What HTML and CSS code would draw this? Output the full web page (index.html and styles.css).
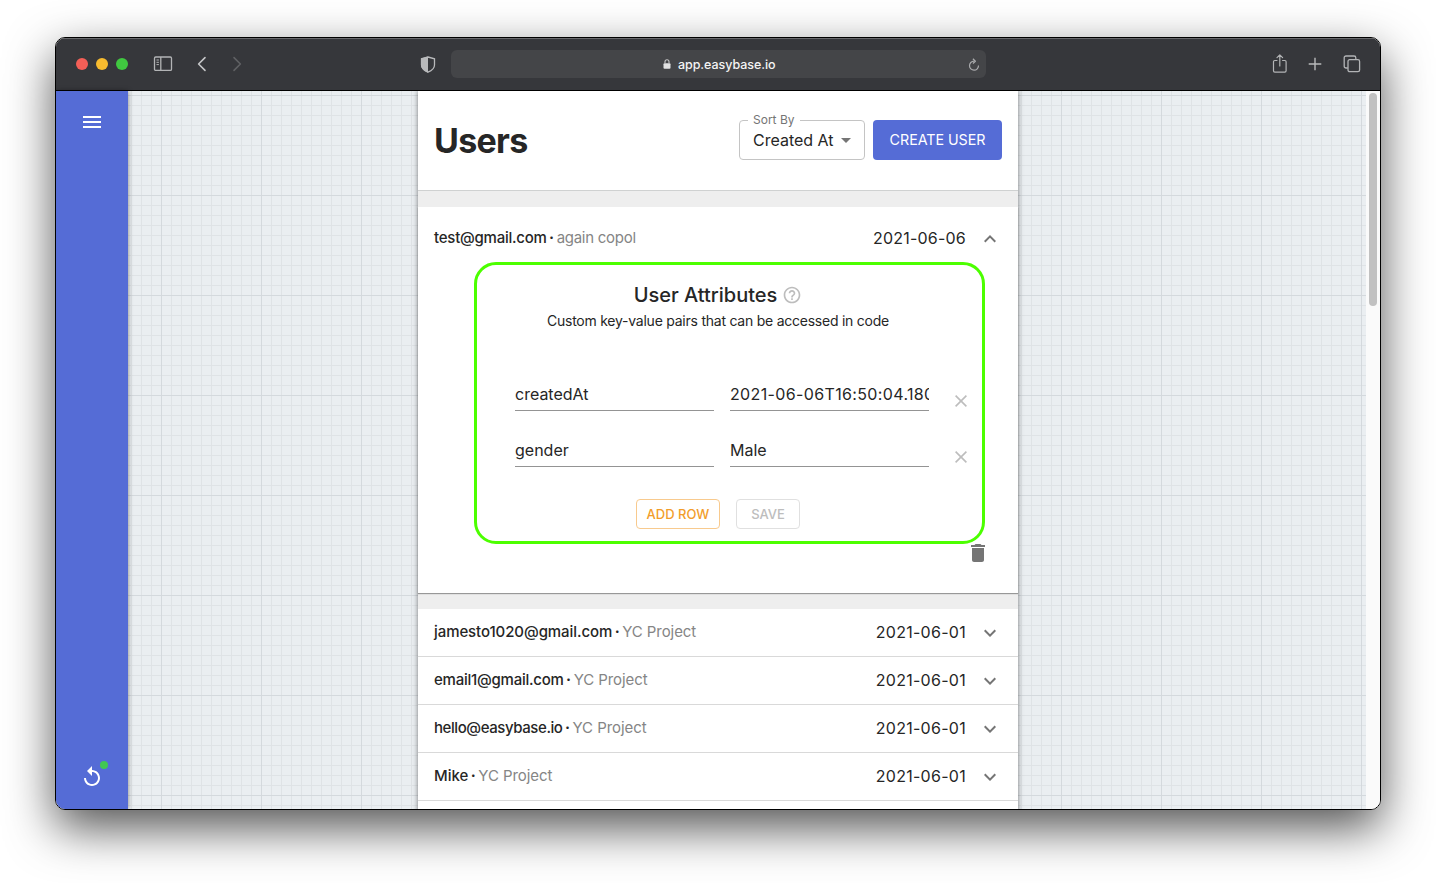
FILE: index.html
```html
<!DOCTYPE html>
<html lang="en">
<head>
<meta charset="utf-8">
<title>Users</title>
<link rel="stylesheet" href="styles.css">
</head>
<body>
<div class="window">
  <header class="toolbar">
    <div class="lights"><i class="light red"></i><i class="light yellow"></i><i class="light green"></i></div>
    <svg class="tb-sidebar" width="20" height="16" viewBox="0 0 20 16" fill="none" stroke="#b3b4b6" stroke-width="1.3"><rect x="1.500" y="1" width="17" height="13.4" rx="1.2"/><path d="M7.800 1v13.4"/><path d="M3.500 4h2.4M3.500 6.3h2.4M3.500 8.6h2.4" stroke-width="1"/></svg>
    <svg class="tb-back" width="10" height="16" viewBox="0 0 10 16" fill="none" stroke="#c4c5c7" stroke-width="1.6" stroke-linecap="round" stroke-linejoin="round"><path d="M8 1.6 1.6 8 8 14.4"/></svg>
    <svg class="tb-next" width="10" height="16" viewBox="0 0 10 16" fill="none" stroke="#5f6063" stroke-width="1.6" stroke-linecap="round" stroke-linejoin="round"><path d="M2 1.6 8.4 8 2 14.4"/></svg>
    <svg class="tb-shield" width="16" height="17" viewBox="0 0 16 17"><path d="M8 1 14.5 2.8V9c0 3.400-2.800 5.600-6.500 7.200C4.300 14.600 1.500 12.400 1.500 9V2.800z" fill="none" stroke="#b8b9bb" stroke-width="1.300"/><path d="M8 .6 1 2.600V9c0 3.700 3 6 7 7.700z" fill="#b8b9bb"/></svg>
    <div class="address">
      <svg class="lock" width="8" height="10" viewBox="0 0 8 10"><rect x=".5" y="4.300" width="7" height="5.500" rx="1" fill="#e2e2e3"/><path d="M2 4.500V2.800a2 2 0 0 1 4 0v1.700" fill="none" stroke="#c6c6c7" stroke-width="1.100"/></svg>
      <span class="url">app.easybase.io</span>
      <svg class="reload" width="12" height="13" viewBox="0 0 12 13" fill="none" stroke="#a9aaac" stroke-width="1.200"><path d="M6 3.200A4.500 4.500 0 1 0 10.500 7.600"/><path d="M4.900.8 7.400 3.200 4.900 5.500" stroke-linejoin="round"/></svg>
    </div>
    <svg class="tb-share" width="16" height="20" viewBox="0 0 16 20" fill="none" stroke="#b3b4b6" stroke-width="1.200" stroke-linecap="round" stroke-linejoin="round"><path d="M5 6.500H2.800A1.300 1.300 0 0 0 1.500 7.800v9a1.300 1.300 0 0 0 1.300 1.300h10a1.300 1.300 0 0 0 1.300-1.300v-9a1.300 1.300 0 0 0-1.300-1.300h-2.200M7.800 12V1M5 3.600 7.800.900l2.800 2.700"/></svg>
    <svg class="tb-plus" width="14" height="14" viewBox="0 0 14 14" stroke="#b9babc" stroke-width="1.400"><path d="M7 .7v12.600M.7 7h12.600"/></svg>
    <svg class="tb-tabs" width="18" height="18" viewBox="0 0 18 18" fill="none" stroke="#b3b4b6" stroke-width="1.300"><rect x="5" y="4.700" width="11.600" height="12" rx="1.700"/><path d="M4.800 13H3a1.800 1.800 0 0 1-1.800-1.800V2.800A1.800 1.800 0 0 1 3 1h8a1.800 1.800 0 0 1 1.800 1.800v1.700"/></svg>
  </header>
  <div class="content">
    <nav class="sidebar">
      <svg class="menu" width="18" height="12" viewBox="0 0 18 12" fill="#fff"><path d="M0 0h18v2H0zM0 5h18v2H0zM0 10h18v2H0z"/></svg>
      <div class="refresh">
        <svg width="24" height="24" viewBox="0 0 24 24" fill="#fff"><path d="M12 5V1L7 6l5 5V7c3.310 0 6 2.690 6 6s-2.690 6-6 6-6-2.690-6-6H4c0 4.420 3.580 8 8 8s8-3.580 8-8-3.580-8-8-8z"/></svg>
        <i class="status"></i>
      </div>
    </nav>
    <main class="canvas">
      <section class="panel">
        <div class="head">
          <h1 class="title">Users</h1>
          <div class="select"><span class="select-label">Sort By</span><span class="select-value">Created At</span>
            <svg width="10" height="5" viewBox="0 0 10 5"><path d="M0 0h10L5 5z" fill="#757575"/></svg></div>
          <div class="create">CREATE USER</div>
        </div>
        <article class="open">
          <div class="row">
            <span class="who w-test">test@gmail.com</span><span class="dot">·</span><span class="proj p-copol">again copol</span>
            <span class="date d-six">2021-06-06</span>
            <svg class="chev" width="24" height="24" viewBox="0 0 24 24" fill="#757575"><path d="M12 8l-6 6 1.410 1.410L12 10.830l4.590 4.580L18 14z"/></svg>
          </div>
          <div class="attrs">
            <div class="attrs-title"><span>User Attributes</span>
              <svg width="20" height="20" viewBox="0 0 24 24" fill="#bdbdbd"><path d="M11 18h2v-2h-2v2zm1-16C6.480 2 2 6.480 2 12s4.480 10 10 10 10-4.480 10-10S17.520 2 12 2zm0 18c-4.410 0-8-3.590-8-8s3.590-8 8-8 8 3.590 8 8-3.590 8-8 8zm0-14c-2.210 0-4 1.790-4 4h2c0-1.100.9-2 2-2s2 .9 2 2c0 2-3 1.750-3 5h2c0-2.250 3-2.500 3-5 0-2.210-1.790-4-4-4z"/></svg></div>
            <div class="attrs-sub">Custom key-value pairs that can be accessed in code</div>
            <div class="fields">
              <div class="field">createdAt</div><div class="field stamp">2021-06-06T16:50:04.180</div>
              <svg class="x" width="12" height="12" viewBox="0 0 12 12" stroke="#bdbdbd" stroke-width="1.600"><path d="M.6.6l10.800 10.800M11.400.6.6 11.400"/></svg>
              <div class="field">gender</div><div class="field">Male</div>
              <svg class="x" width="12" height="12" viewBox="0 0 12 12" stroke="#bdbdbd" stroke-width="1.600"><path d="M.6.6l10.800 10.800M11.400.6.6 11.400"/></svg>
            </div>
            <div class="actions"><div class="btn add">ADD ROW</div><div class="btn save">SAVE</div></div>
          </div>
          <svg class="trash" width="14" height="18" viewBox="0 0 14 18" fill="#757575"><path d="M1 16c0 1.100.9 2 2 2h8c1.100 0 2-.9 2-2V4H1v12zM14 1h-3.500l-1-1h-5l-1 1H0v2h14V1z"/></svg>
        </article>
        <div class="list">
          <div class="row"><span class="who w-james">jamesto1020@gmail.com</span><span class="dot">·</span><span class="proj p-yc">YC Project</span><span class="date d-one">2021-06-01</span><svg class="chev" width="24" height="24" viewBox="0 0 24 24" fill="#757575"><path d="M16.590 8.590L12 13.170 7.410 8.590 6 10l6 6 6-6z"/></svg></div>
          <div class="row"><span class="who w-email">email1@gmail.com</span><span class="dot">·</span><span class="proj p-yc">YC Project</span><span class="date d-one">2021-06-01</span><svg class="chev" width="24" height="24" viewBox="0 0 24 24" fill="#757575"><path d="M16.590 8.590L12 13.170 7.410 8.590 6 10l6 6 6-6z"/></svg></div>
          <div class="row"><span class="who w-hello">hello@easybase.io</span><span class="dot">·</span><span class="proj p-yc">YC Project</span><span class="date d-one">2021-06-01</span><svg class="chev" width="24" height="24" viewBox="0 0 24 24" fill="#757575"><path d="M16.590 8.590L12 13.170 7.410 8.590 6 10l6 6 6-6z"/></svg></div>
          <div class="row"><span class="who w-mike">Mike</span><span class="dot">·</span><span class="proj p-yc">YC Project</span><span class="date d-one">2021-06-01</span><svg class="chev" width="24" height="24" viewBox="0 0 24 24" fill="#757575"><path d="M16.590 8.590L12 13.170 7.410 8.590 6 10l6 6 6-6z"/></svg></div>
        </div>
      </section>
    </main>
    <div class="scroll"><div class="thumb"></div></div>
  </div>
</div>
</body>
</html>
```
FILE: styles.css
```css
* { box-sizing: border-box; }
body { margin: 0; height: 883px; overflow: hidden; background: #fff; padding: 37px 55px; font-family: Inter, "Liberation Sans", sans-serif; color: #262626; }
svg { display: block; flex: none; }
span { white-space: nowrap; }
.window { width: 1326px; height: 773px; border: 1px solid #000; border-radius: 10px; overflow: hidden; display: flex; flex-direction: column; box-shadow: 0 18px 48px rgba(0,0,0,.68); }
.toolbar { height: 53px; flex: none; display: flex; align-items: center; background: #36373b; border-bottom: 1px solid #000; box-shadow: inset 0 1px 0 #68696c; padding: 0 19px 0 20px; }
.lights { display: flex; gap: 8px; }
.light { width: 12px; height: 12px; border-radius: 50%; }
.red { background: #f45f57; }
.yellow { background: #f7bb2f; }
.green { background: #40c840; }
.tb-sidebar { margin-left: 25px; }
.tb-back { margin-left: 24px; }
.tb-next { margin-left: 25px; }
.tb-shield { margin-left: 178px; }
.address { margin-left: 15px; width: 535px; height: 28px; border-radius: 6px; background: #444548; display: flex; align-items: center; padding-left: 212px; padding-right: 6px; }
.url { margin-left: 7px; font-size: 12.500px; font-weight: 500; letter-spacing: -.06px; color: #f4f4f4; }
.reload { margin-left: auto; }
.tb-share { margin-left: auto; }
.tb-plus { margin-left: 20px; }
.tb-tabs { margin-left: 21px; }
.content { flex: 1; display: flex; min-height: 0; }
.sidebar { width: 72px; background: #556cd6; display: flex; flex-direction: column; justify-content: space-between; align-items: center; padding: 25px 0 20px; box-shadow: 0 0 5px rgba(0,0,0,.45); z-index: 1; }
.refresh { position: relative; }
.status { position: absolute; right: -4px; top: -4px; width: 8px; height: 8px; border-radius: 50%; background: #41c752; }
.canvas { flex: 1; padding-left: 290px; background-color: #eaeef1; overflow: hidden;
  background-image: linear-gradient(90deg, #d4d9dd 1px, transparent 1px), linear-gradient(#d4d9dd 1px, transparent 1px), linear-gradient(90deg, #dfe3e6 1px, transparent 1px), linear-gradient(#dfe3e6 1px, transparent 1px);
  background-size: 100px 100px, 100px 100px, 10px 10px, 10px 10px; background-position: 33px 4px, 33px 4px, 3px 4px, 3px 4px; }
.panel { width: 600px; height: 730px; background: #eee; box-shadow: 0 0 5px rgba(0,0,0,.5); }
.head { height: 100px; background: #fff; border-bottom: 1px solid #cfd1d1; display: flex; padding: 29px 16px 0; }
.title { margin: 0 auto 0 0; font-size: 34px; line-height: 42px; font-weight: 700; letter-spacing: -.7px; }
.select { position: relative; width: 126px; height: 40px; border: 1px solid #c4c4c4; border-radius: 4px; display: flex; align-items: center; justify-content: space-between; padding: 0 13px; font-size: 16px; }
.select-label { position: absolute; left: 8px; top: -9px; background: #fff; width: 52px; padding-left: 5px; font-size: 12px; line-height: 15px; color: #757575; }
.create { margin-left: 8px; width: 129px; height: 40px; border-radius: 4px; background: #556cd6; color: #fff; display: flex; align-items: center; justify-content: center; font-size: 14.300px; letter-spacing: -.05px; padding-bottom: 1px; }
.open { margin-top: 16px; height: 386px; background: #fff; padding-top: 7px; box-shadow: 0 1px 1px rgba(0,0,0,.36); }
.row { height: 48px; display: flex; align-items: center; padding: 0 16px; font-size: 15px; }
.who { font-weight: 500; }
.dot { width: 10px; text-align: center; font-weight: 700; }
.who, .dot, .proj { padding-bottom: 2px; }
.w-test { letter-spacing: -.24px; }
.w-james { letter-spacing: -.08px; }
.w-email { letter-spacing: -.24px; }
.w-hello { letter-spacing: -.42px; }
.proj { color: #858585; }
.p-copol { letter-spacing: -.27px; }
.p-yc { letter-spacing: -.07px; }
.date { margin-left: auto; font-size: 16px; }
.d-six { letter-spacing: .22px; }
.d-one { letter-spacing: .28px; padding-bottom: 1px; }
.chev { margin: 0 0 0 12px; }
.open .chev { margin-top: 2px; }
.attrs { margin-left: 56px; width: 511px; height: 282px; border: 3px solid #4cff00; border-radius: 22px; padding-top: 18px; padding-right: 23px; }
.attrs-title { height: 24px; display: flex; align-items: center; justify-content: center; gap: 5px; font-size: 20px; font-weight: 500; }
.attrs-sub { height: 28px; line-height: 28px; text-align: center; font-size: 14px; letter-spacing: -.24px; }
.fields { margin: 40px 0 0 38px; display: grid; grid-template-columns: 199px 199px 12px; column-gap: 16px; row-gap: 20px; }
.field { height: 36px; border-bottom: 1px solid #949494; font-size: 16px; line-height: 38px; overflow: hidden; white-space: nowrap; }
.stamp { letter-spacing: .36px; }
.x { margin: 20px 0 0 10px; }
.actions { display: flex; justify-content: center; gap: 16px; margin-top: 32px; }
.btn { height: 30px; border-radius: 4px; font-size: 13px; font-weight: 500; display: flex; align-items: center; justify-content: center; border: 1px solid; }
.add { width: 84px; color: #f29d2b; border-color: #f8ca8e; }
.save { width: 64px; color: #bdbdbd; border-color: #e0e0e0; }
.trash { margin: 0 0 0 553px; }
.list { margin-top: 16px; height: 300px; background: #fff; }
.list .row { border-bottom: 1px solid #d9d9d9; }
.scroll { width: 14px; background: #fafafa; padding: 2px 3px; }
.thumb { width: 8px; height: 213px; border-radius: 4px; background: #c1c1c1; }
```
